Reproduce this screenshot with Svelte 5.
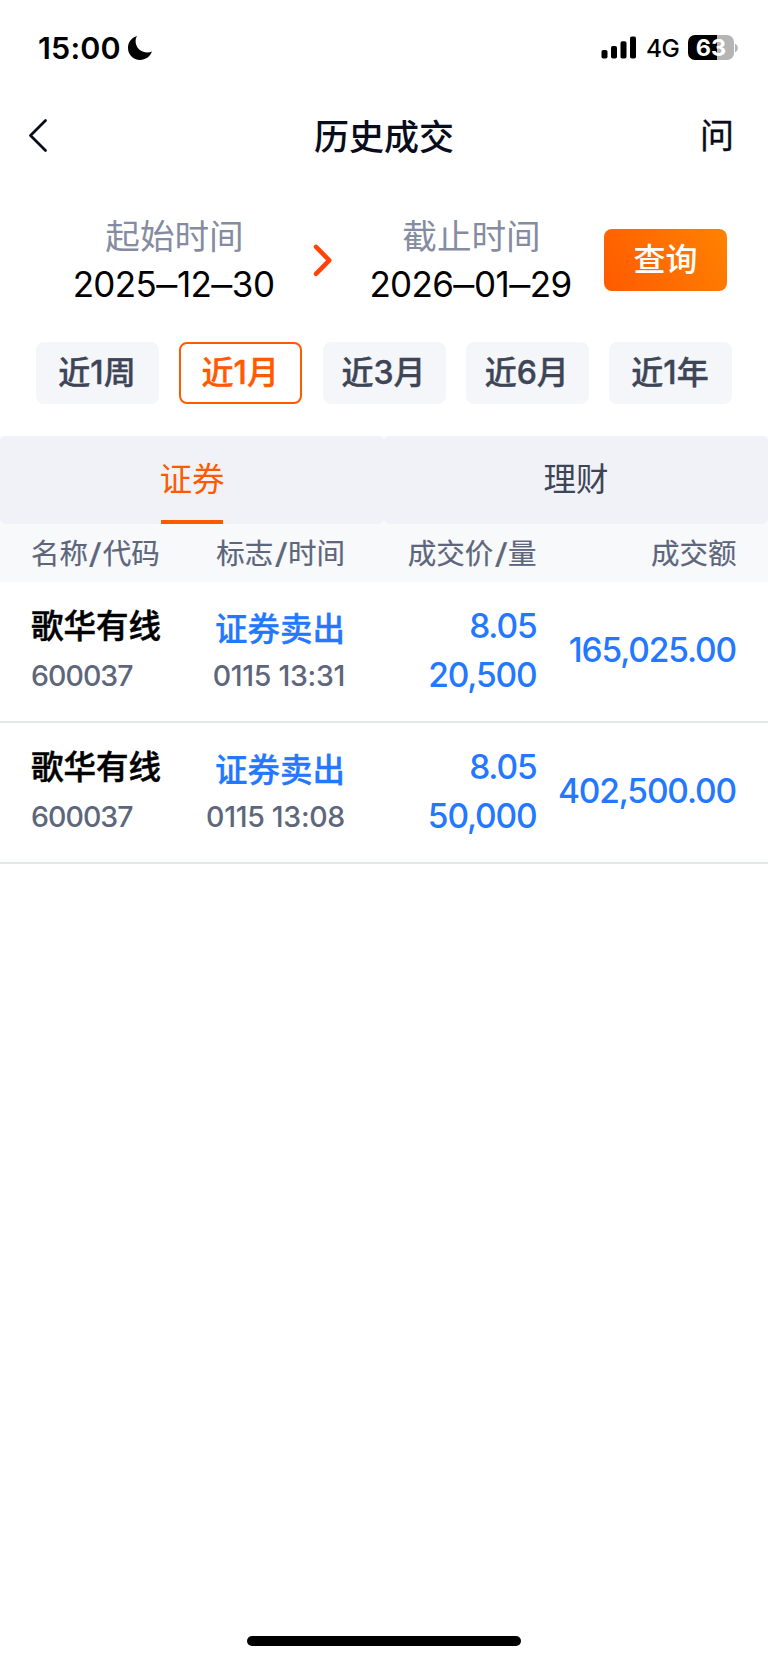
<script>
  const ranges = ['近1周', '近1月', '近3月', '近6月', '近1年'];
  let activeRange = $state('近1月');
  const tabs = ['证券', '理财'];
  let activeTab = $state('证券');
  const columns = [['名称', '代码'], ['标志', '时间'], ['成交价', '量'], ['成交额']];
  const trades = [
    { name: '歌华有线', code: '600037', side: '证券卖出', time: '0115 13:31', price: '8.05', qty: '20,500', amount: '165,025.00' },
    { name: '歌华有线', code: '600037', side: '证券卖出', time: '0115 13:08', price: '8.05', qty: '50,000', amount: '402,500.00' }
  ];
</script>

<div class="screen">
  <div class="status">
    <span class="clock">15:00</span>
    <svg class="moon" width="26" height="26" viewBox="0 0 26 26"><path d="M10 1C3.500 3.200 1 8 1 13C1 19.800 6.400 25 13 25C18.500 25 23 21.800 25 16.600C23.500 17.200 22 17.400 20.500 17.400C13.500 17.400 8.600 12.600 8.600 6C8.600 4.200 9.100 2.500 10 1Z" /></svg>
    <span class="grow"></span>
    <svg class="signal" width="36" height="24" viewBox="0 0 36 24">
      <rect x="0.500" y="14" width="6" height="8.500" rx="1.800" />
      <rect x="10" y="10" width="6" height="12.500" rx="1.800" />
      <rect x="19.500" y="5.200" width="6" height="17.300" rx="1.800" />
      <rect x="29" y="0.500" width="6" height="22" rx="1.800" />
    </svg>
    <span class="net">4G</span>
    <div class="battery">63</div>
    <svg class="nub" width="3" height="10" viewBox="0 0 3 10"><path d="M0 0.500C3.800 2.500 3.800 7.500 0 9.500Z" fill="#b5b5b5" /></svg>
  </div>

  <header>
    <svg width="24" height="36" viewBox="0 0 24 36" fill="none" stroke="#080c1c" stroke-width="2.800" stroke-linecap="round" stroke-linejoin="round"><path d="M18.500 2.500L3.500 17.500L18.500 32.500" /></svg>
    <h1>历史成交</h1>
    <span class="ask">问</span>
  </header>

  <section class="period">
    <div class="date">
      <span class="label">起始时间</span>
      <span class="value">2025<i>–</i>12<i>–</i>30</span>
    </div>
    <svg class="arrow" width="20" height="34" viewBox="0 0 20 34" fill="none" stroke="#ff4208" stroke-width="4.500" stroke-linecap="round" stroke-linejoin="round"><path d="M3 3.800L16.300 17.300L3 30.800" /></svg>
    <div class="date">
      <span class="label">截止时间</span>
      <span class="value">2026<i>–</i>01<i>–</i>29</span>
    </div>
    <button class="query">查询</button>
  </section>

  <section class="ranges">
    {#each ranges as r}
      <button class:active={r === activeRange} onclick={() => (activeRange = r)}>{r}</button>
    {/each}
  </section>

  <nav>
    {#each tabs as t}
      <button class:active={t === activeTab} onclick={() => (activeTab = t)}><span>{t}</span></button>
    {/each}
  </nav>

  <div class="row head">
    {#each columns as c}
      <span>{c[0]}{#if c[1]}<i>/</i>{c[1]}{/if}</span>
    {/each}
  </div>

  {#each trades as t}
    <div class="row trade">
      <div class="cell"><span class="name">{t.name}</span><span class="small code">{t.code}</span></div>
      <div class="cell"><span class="side">{t.side}</span><span class="small time">{t.time}</span></div>
      <div class="cell"><span class="num">{t.price}</span><span class="num">{t.qty}</span></div>
      <div class="cell amount"><span class="num">{t.amount}</span></div>
    </div>
  {/each}

  <div class="home"></div>
</div>

<style>
  :global(body) {
    margin: 0;
    background: #fff;
  }
  .screen {
    display: flex;
    flex-direction: column;
    box-sizing: border-box;
    width: 768px;
    height: 1663px;
    overflow: hidden;
    background: #fff;
    color: #000;
    font-family: Inter, 'Noto Sans CJK SC', sans-serif;
  }
  button {
    margin: 0;
    padding: 0;
    border: 0;
    font-family: inherit;
  }
  i {
    font-style: normal;
  }
  .status {
    display: flex;
    align-items: center;
    height: 95px;
    padding: 0 30px 0 38px;
    box-sizing: border-box;
  }
  .clock {
    width: 89px;
    padding-bottom: 1px;
    font-size: 30.5px;
    font-weight: 600;
    letter-spacing: 0.15px;
  }
  .grow {
    flex: 1;
  }
  .signal {
    margin-right: 9px;
  }
  .net {
    width: 42px;
    padding-top: 1px;
    font-size: 24.5px;
    font-weight: 500;
    letter-spacing: -0.7px;
  }
  .battery {
    width: 46px;
    height: 25px;
    border-radius: 7px;
    background: linear-gradient(90deg, #000 0 29px, #b5b5b5 29px);
    color: #fff;
    font-size: 23.5px;
    font-weight: 700;
    line-height: 25px;
    text-align: center;
  }
  .nub {
    margin-left: 1px;
  }
  header {
    display: flex;
    align-items: center;
    justify-content: space-between;
    height: 82px;
    padding: 0 34px 0 27px;
    color: #080c1c;
  }
  h1 {
    margin: 2px 0 0 7px;
    font-size: 35px;
    font-weight: 500;
    line-height: 50px;
  }
  .ask {
    width: 34px;
    font-size: 34px;
    line-height: 50px;
    font-weight: 400;
    margin-left: -10px;
    -webkit-text-stroke: 0.4px currentColor;
  }
  .period {
    display: flex;
    align-items: center;
    height: 165px;
    padding: 0 41px 0 73px;
  }
  .date {
    display: flex;
    flex-direction: column;
    align-items: center;
    width: 203px;
    padding-bottom: 1px;
  }
  .label {
    color: #858ca2;
    font-size: 34.6px;
    line-height: 48px;
    font-weight: 400;
    font-family: 'Noto Sans CJK SC', sans-serif;
  }
  .value {
    margin: 1px 0 -1px -2px;
    font-size: 35px;
    line-height: 51px;
    letter-spacing: -0.6px;
    white-space: nowrap;
  }
  .value i {
    display: inline-block;
    margin: 0 2px 0 1.7px;
    transform: scaleX(1.2);
  }
  .arrow {
    margin: 1px 56px 0 37px;
    width: 20px;
    flex: none;
  }
  .arrow + .date {
    margin-left: -19px;
  }
  .query {
    margin: 0 0 0 auto;
    width: 123px;
    height: 62px;
    border-radius: 8px;
    background: linear-gradient(60deg, #ff5a00, #ff8200);
    color: #fff;
    font-size: 32px;
    font-weight: 500;
    line-height: 60px;
  }
  .ranges {
    display: flex;
    justify-content: space-between;
    padding: 0 36px;
    height: 94px;
    align-items: flex-start;
  }
  .ranges button {
    width: 123px;
    height: 61.500px;
    box-sizing: border-box;
    border: 2px solid #f5f6fa;
    border-radius: 8px;
    background: #f5f6fa;
    color: #3d4556;
    font-size: 32px;
    font-weight: 500;
    line-height: 57px;
    padding: 0 1px 0 0;
    -webkit-text-stroke: 0.4px currentColor;
  }
  .ranges button.active {
    border-color: #ff5a00;
    background: #fff;
    color: #ff5a00;
  }
  nav {
    display: flex;
    background: #f8f9fb;
  }
  nav button {
    flex: 1;
    display: flex;
    justify-content: center;
    height: 88px;
    border-radius: 6px;
    background: #f1f2f7;
    color: #3d4556;
    font-size: 32.5px;
    line-height: 88px;
  }
  nav span {
    box-sizing: border-box;
    width: 62px;
    height: 88px;
    border-bottom: 4px solid transparent;
    display: flex;
    justify-content: center;
    white-space: nowrap;
  }
  nav .active {
    color: #ff5a00;
  }
  nav .active span {
    border-color: #ff5a00;
  }
  .row {
    display: grid;
    grid-template-columns: 150px 164px 191.500px 200px;
    padding: 0 31px 0 31px;
    text-align: right;
  }
  .row > :first-child {
    text-align: left;
  }
  .head {
    height: 58px;
    background: #f8f9fb;
    color: #5d667b;
    font-size: 28.5px;
    line-height: 59px;
    -webkit-text-stroke: 0.2px currentColor;
  }
  .head i {
    display: inline-block;
    margin: 0 2.2px;
    transform: scaleX(1.3);
  }
  .trade {
    box-sizing: border-box;
    height: 141px;
    border-bottom: 2px solid #e3e6eb;
  }
  .cell {
    display: flex;
    flex-direction: column;
    padding-top: 20px;
    white-space: nowrap;
  }
  .name {
    font-size: 32.5px;
    font-weight: 500;
    line-height: 50px;
    -webkit-text-stroke: 0.5px currentColor;
  }
  .side {
    padding-top: 3px;
    color: #2478ff;
    font-size: 32.5px;
    font-weight: 500;
    line-height: 50px;
    -webkit-text-stroke: 0.3px currentColor;
  }
  .small {
    margin-top: -1px;
    color: #5d667b;
    font-size: 28.5px;
    font-weight: 500;
    line-height: 50px;
  }
  .code {
    letter-spacing: -0.95px;
  }
  .time {
    margin-top: -4px;
    letter-spacing: -0.3px;
  }
  .num {
    color: #2478ff;
    font-size: 33.5px;
    font-weight: 500;
    line-height: 49px;
    letter-spacing: -1.15px;
  }
  .amount {
    padding: 44px 0.5px 0 0;
  }
  .home {
    width: 274px;
    height: 10px;
    margin: auto auto 17px;
    border-radius: 5px;
    background: #000;
  }
</style>
